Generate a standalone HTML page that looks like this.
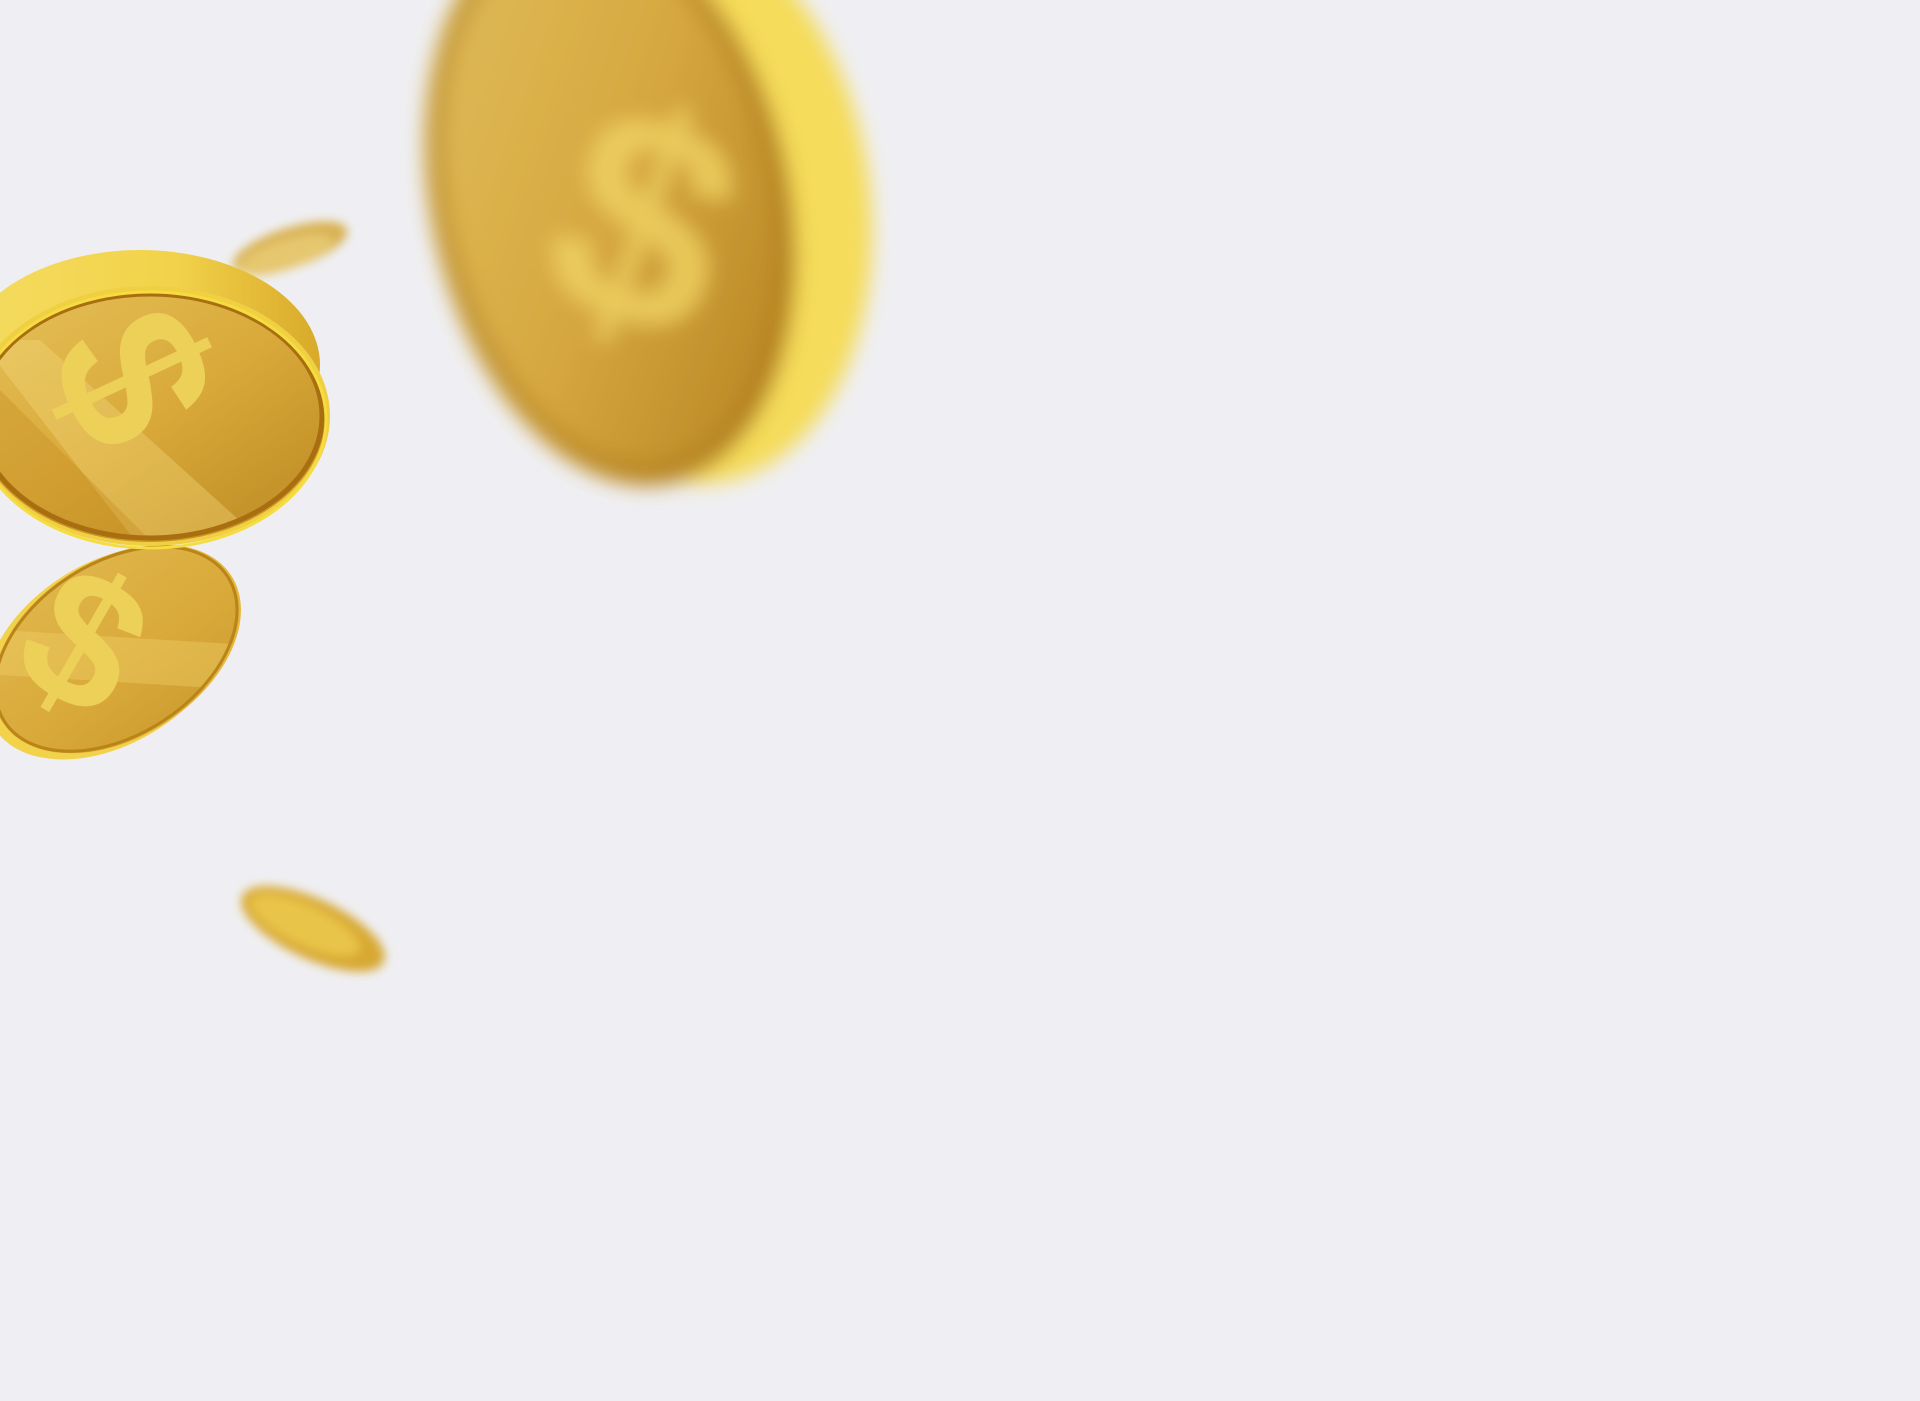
<!DOCTYPE html>
<html><head><meta charset="utf-8"><style>
html,body{margin:0;padding:0;background:#efeff3;width:1920px;height:1401px;overflow:hidden}
svg{display:block}
</style></head><body>
<svg width="1920" height="1401" viewBox="0 0 1920 1401" xmlns="http://www.w3.org/2000/svg">
<defs>
<linearGradient id="face" x1="0" y1="0" x2="1" y2="1">
<stop offset="0" stop-color="#e6c25a"/><stop offset="0.5" stop-color="#d9a93a"/><stop offset="1" stop-color="#b8861f"/></linearGradient>
<linearGradient id="rim" x1="0" y1="0" x2="1" y2="0">
<stop offset="0" stop-color="#f5dc60"/><stop offset="0.6" stop-color="#f2d24a"/><stop offset="1" stop-color="#d9a92a"/></linearGradient>
<linearGradient id="big" x1="0" y1="0" x2="1" y2="1">
<stop offset="0" stop-color="#e2c060"/><stop offset="0.5" stop-color="#d6a840"/><stop offset="1" stop-color="#b07c1c"/></linearGradient>
<filter id="b1" x="-30%" y="-30%" width="160%" height="160%"><feGaussianBlur stdDeviation="10"/></filter>
<filter id="b2" x="-50%" y="-50%" width="200%" height="200%"><feGaussianBlur stdDeviation="5"/></filter>
<clipPath id="c1"><ellipse cx="150" cy="416" rx="172" ry="122"/></clipPath>
<clipPath id="c2"><ellipse cx="116" cy="649" rx="135" ry="88" transform="rotate(-33 116 649)"/></clipPath>
</defs>

<g filter="url(#b1)">
<ellipse cx="680" cy="200" rx="190" ry="285" fill="#f5dc5a" transform="rotate(-8 680 200)"/>
<ellipse cx="610" cy="200" rx="180" ry="290" fill="url(#big)" transform="rotate(-12 610 200)"/>
<ellipse cx="610" cy="200" rx="168" ry="275" fill="none" stroke="#a87416" stroke-width="16" transform="rotate(-12 610 200)" opacity="0.5"/>
<text x="560" y="320" font-family="Liberation Sans, sans-serif" font-weight="bold" font-size="300" fill="#efd060" opacity="0.85" transform="rotate(20 630 220)">$</text>
</g>

<g filter="url(#b2)">
<ellipse cx="290" cy="248" rx="60" ry="20" fill="#d8b050" transform="rotate(-18 290 248)"/>
<ellipse cx="285" cy="255" rx="50" ry="15" fill="#e6c770" transform="rotate(-18 285 255)"/>
</g>
<g filter="url(#b2)">
<ellipse cx="313" cy="929" rx="78" ry="30" fill="#d8a830" transform="rotate(25 313 929)"/>
<ellipse cx="305" cy="925" rx="60" ry="20" fill="#e8c44a" transform="rotate(25 305 925)"/>
</g>

<g>
<ellipse cx="110" cy="653" rx="138" ry="90" fill="#f2d24a" transform="rotate(-33 110 653)"/>
<ellipse cx="118" cy="649" rx="135" ry="88" fill="#e6b83a" transform="rotate(-33 118 649)"/>
<g clip-path="url(#c2)">
<rect x="-50" y="500" width="400" height="300" fill="url(#face)"/>
<polygon points="0,630 250,645 250,690 0,675" fill="#f4d870" opacity="0.35"/>
<text x="30" y="720" font-family="Liberation Sans, sans-serif" font-weight="bold" font-size="190" fill="#ecd058" transform="rotate(30 110 650)">$</text>
</g>
<ellipse cx="116" cy="649" rx="133" ry="86" fill="none" stroke="#ba8418" stroke-width="3" transform="rotate(-33 116 649)"/>
</g>

<g>
<ellipse cx="140" cy="365" rx="180" ry="115" fill="url(#rim)"/>
<ellipse cx="150" cy="416" rx="180" ry="130" fill="#f0d042"/>
<ellipse cx="150" cy="418" rx="175" ry="124" fill="#c99526"/>
<g clip-path="url(#c1)">
<rect x="-40" y="290" width="380" height="260" fill="url(#face)"/>
<polygon points="-20,340 40,340 250,530 150,560" fill="#f5dc80" opacity="0.35"/>
<polygon points="-20,370 145,535 60,550 -20,470" fill="#c28a20" opacity="0.35"/>
<text x="40" y="480" font-family="Liberation Sans, sans-serif" font-weight="bold" font-size="210" fill="#ecd058" transform="rotate(65 140 420)">$</text>
</g>
<ellipse cx="150" cy="416" rx="172" ry="122" fill="none" stroke="#a86e10" stroke-width="5"/>
<ellipse cx="150" cy="420" rx="176" ry="128" fill="none" stroke="#f5dc40" stroke-width="3"/>
</g>
</svg>
</body></html>
